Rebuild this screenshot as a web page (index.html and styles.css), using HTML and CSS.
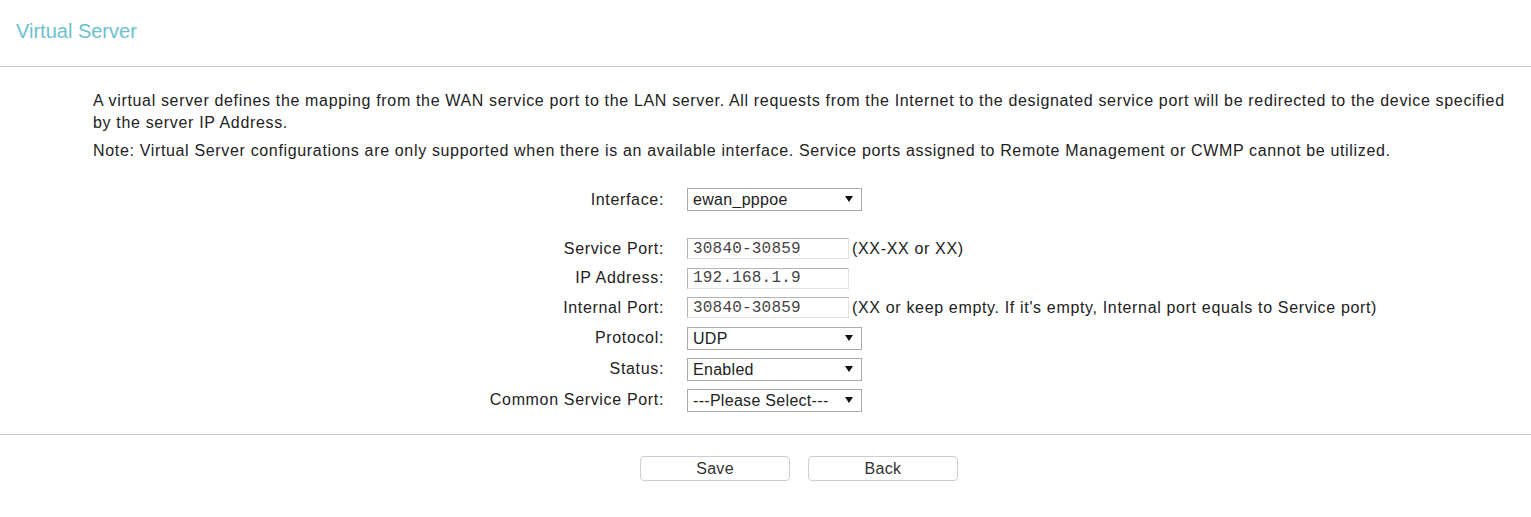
FILE: index.html
```html
<!DOCTYPE html>
<html>
<head>
<meta charset="utf-8">
<title>Virtual Server</title>
<link rel="stylesheet" href="styles.css">
</head>
<body>
<div class="header"><h1 class="title">Virtual Server</h1></div>
<div class="intro">
  <p class="p1">A virtual server defines the mapping from the WAN service port to the LAN server. All requests from the Internet to the designated service port will be redirected to the device specified by the server IP Address.</p>
  <p class="p2">Note: Virtual Server configurations are only supported when there is an available interface. Service ports assigned to Remote Management or CWMP cannot be utilized.</p>
</div>
<div class="form">
  <div class="row row-sel">
    <div class="label">Interface:</div>
    <span class="sel-wrap"><select class="sel"><option>ewan_pppoe</option></select></span>
  </div>
  <div class="spacer"></div>
  <div class="row row-in">
    <div class="label">Service Port:</div>
    <input class="txt" type="text" value="30840-30859">
    <span class="hint">(XX-XX or XX)</span>
  </div>
  <div class="row row-in">
    <div class="label">IP Address:</div>
    <input class="txt" type="text" value="192.168.1.9">
  </div>
  <div class="row row-in">
    <div class="label">Internal Port:</div>
    <input class="txt" type="text" value="30840-30859">
    <span class="hint">(XX or keep empty. If it's empty, Internal port equals to Service port)</span>
  </div>
  <div class="row row-sel">
    <div class="label">Protocol:</div>
    <span class="sel-wrap"><select class="sel"><option>UDP</option></select></span>
  </div>
  <div class="row row-sel">
    <div class="label">Status:</div>
    <span class="sel-wrap"><select class="sel"><option>Enabled</option></select></span>
  </div>
  <div class="row row-sel">
    <div class="label">Common Service Port:</div>
    <span class="sel-wrap"><select class="sel"><option>---Please Select---</option></select></span>
  </div>
</div>
<div class="divider"></div>
<div class="buttons">
  <button class="btn" type="button">Save</button>
  <button class="btn" type="button">Back</button>
</div>
</body>
</html>
```
FILE: styles.css
```css
html, body {
  margin: 0;
  padding: 0;
  background: #ffffff;
}
body {
  font-family: "Liberation Sans", Arial, sans-serif;
  font-size: 16px;
  letter-spacing: 0.66px;
  color: #333333;
}
.header {
  height: 66px;
  border-bottom: 1px solid #cccccc;
  box-sizing: content-box;
}
.title {
  margin: 0;
  padding: 19px 0 0 16px;
  font-size: 20px;
  line-height: 24px;
  font-weight: normal;
  letter-spacing: 0;
  color: #6dbfcf;
}
.intro {
  margin-top: 23px;
  padding: 0 20px 0 93px;
}
.intro p {
  margin: 0;
  line-height: 22px;
  color: #222222;
}
.intro .p2 {
  margin-top: 6px;
}
.form {
  margin-top: 22px;
}
.row {
  display: flex;
  align-items: center;
}
.row-sel {
  height: 31px;
}
.row-in {
  height: 29.5px;
}
.spacer {
  height: 19px;
}
.label {
  width: 664px;
  text-align: right;
  margin-right: 23px;
  flex-shrink: 0;
  color: #222222;
}
.sel-wrap {
  position: relative;
  display: inline-block;
  width: 175px;
  height: 23px;
}
.sel-wrap::after {
  content: "";
  position: absolute;
  right: 9px;
  top: 8px;
  width: 0;
  height: 0;
  border-left: 4px solid transparent;
  border-right: 4px solid transparent;
  border-top: 6px solid #111111;
  pointer-events: none;
}
.sel {
  -webkit-appearance: none;
  appearance: none;
  box-sizing: border-box;
  width: 175px;
  height: 23px;
  margin: 0;
  padding: 0 0 0 5px;
  border: 1px solid #a9a9a9;
  border-radius: 0;
  background: #ffffff;
  font-family: "Liberation Sans", Arial, sans-serif;
  font-size: 16px;
  letter-spacing: 0.3px;
  color: #222222;
  outline: none;
}
.txt {
  box-sizing: border-box;
  width: 162px;
  height: 21px;
  margin: 0;
  padding: 0 0 0 5px;
  border-top: 1px solid #b4b4b4;
  border-left: 1px solid #b4b4b4;
  border-right: 1px solid #e2e2e2;
  border-bottom: 1px solid #e2e2e2;
  background: #ffffff;
  font-family: "Liberation Mono", "Courier New", monospace;
  font-size: 16px;
  letter-spacing: 0.2px;
  color: #444444;
  outline: none;
}
.hint {
  margin-left: 3px;
  white-space: nowrap;
  color: #222222;
}
.divider {
  margin-top: 18px;
  height: 1px;
  background: #cccccc;
}
.buttons {
  display: flex;
  justify-content: center;
  gap: 18px;
  padding-left: 67px;
  margin-top: 21px;
}
.btn {
  box-sizing: border-box;
  width: 150px;
  height: 25px;
  margin: 0;
  padding: 1px 0 0 0;
  border: 1px solid #cccccc;
  border-radius: 4px;
  background: #ffffff;
  font-family: "Liberation Sans", Arial, sans-serif;
  font-size: 16px;
  letter-spacing: 0.3px;
  color: #333333;
}
```
